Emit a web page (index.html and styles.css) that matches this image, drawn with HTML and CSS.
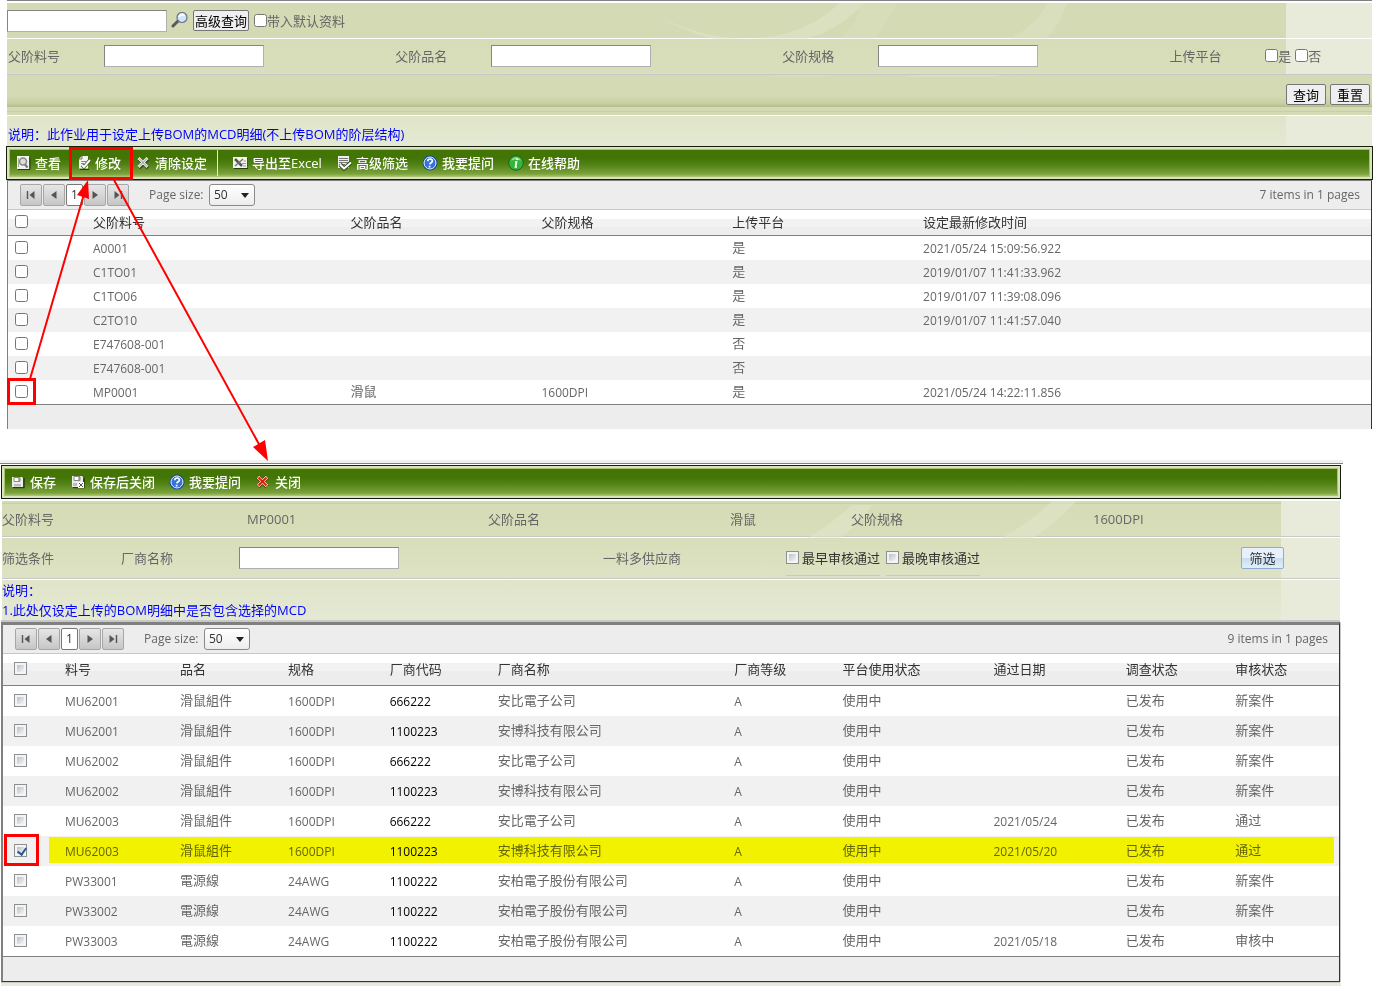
FILE: index.html
```html
<!DOCTYPE html>
<html lang="zh-CN">
<head>
<meta charset="utf-8">
<title>BOM MCD 设定</title>
<link rel="stylesheet" href="styles.css">
</head>
<body>
<svg class="symbols" aria-hidden="true">
  <symbol id="i-first" viewBox="0 0 10 10"><path d="M1.500 1v8" stroke="#555" stroke-width="1.400"/><path d="M8.500 1v8L3.500 5z" fill="#555"/></symbol>
  <symbol id="i-prev" viewBox="0 0 10 10"><path d="M7.500 1v8L2 5z" fill="#555"/></symbol>
  <symbol id="i-next" viewBox="0 0 10 10"><path d="M2.500 1v8L8 5z" fill="#555"/></symbol>
  <symbol id="i-last" viewBox="0 0 10 10"><path d="M8.500 1v8" stroke="#555" stroke-width="1.400"/><path d="M1.500 1v8l5-4z" fill="#555"/></symbol>
  <symbol id="i-view" viewBox="0 0 16 16"><path d="M3 14.500h12V3" fill="none" stroke="#24400a"/><path d="M2 1h12v13H2z" fill="#f2f2ee"/><circle cx="8" cy="6.500" r="3.500" fill="#ddd" stroke="#888" stroke-width="1.500"/><path d="M10 9.500l2.500 3" stroke="#777" stroke-width="2"/><path d="M3.500 3v9" stroke="#aaa"/></symbol>
  <symbol id="i-edit" viewBox="0 0 16 16"><path d="M5 14.500h9M14 4v3" stroke="#24400a"/><path d="M7 1h6v12.500H4V4z" fill="#f4f4f0"/><path d="M4 4h3V1" fill="none" stroke="#777"/><path d="M6 6.500h5M6 8.500h3" stroke="#888"/><path d="M15 5l-6 7-2-2" fill="none" stroke="#36521b" stroke-width="3.500"/><path d="M15 5l-6 7-2-2" fill="none" stroke="#fff" stroke-width="2"/></symbol>
  <symbol id="i-clear" viewBox="0 0 16 16"><path d="M4 4l9 9M13 4l-9 9" stroke="#2a4314" stroke-width="3.600"/><path d="M3.500 3l9 9M12.500 3l-9 9" stroke="#eee" stroke-width="3"/><path d="M4 3.500l8 8M12 3.500l-8 8" stroke="#8b9580"/></symbol>
  <symbol id="i-excel" viewBox="0 0 16 16"><path d="M2 13.500h14V3" fill="none" stroke="#24400a"/><path d="M1 2h14v11H1z" fill="#f4f4ef"/><path d="M3 4l7 7" stroke="#555" stroke-width="2.500"/><path d="M11 4l-8 7" stroke="#777" stroke-width="1.500"/><path d="M10 8.500h4M11.500 6h2.500M11 11h3" stroke="#999"/></symbol>
  <symbol id="i-filter" viewBox="0 0 16 16"><path d="M2 1h11v12H2z" fill="#eee"/><path d="M3 3.500h9M3 5.500h9M3 7.500h9M3 9.500h6" stroke="#777"/><path d="M4 9.500l4 4 7-6" fill="none" stroke="#24400a" stroke-width="4"/><path d="M4 9.500l4 4 7-6" fill="none" stroke="#fff" stroke-width="2.200"/></symbol>
  <symbol id="i-help" viewBox="0 0 16 16"><circle cx="8" cy="8" r="7.500" fill="#174b9c"/><circle cx="8" cy="8" r="6" fill="#3474d8" stroke="#e9f1ff" stroke-width="1"/><path d="M5.700 6.200c.2-3 5-2.800 4.700-.1C10.200 7.700 8 7.800 7.800 9.400M7.600 10.700v1.700" fill="none" stroke="#fff" stroke-width="1.700"/></symbol>
  <symbol id="i-info" viewBox="0 0 16 16"><circle cx="8" cy="8" r="7.300" fill="#34b53c" stroke="#1d641c"/><path d="M3 6c2-5 8-5 10 0-3-2-7-2-10 0z" fill="#9be09a"/><path d="M9.200 3.500L8.900 5M7 7h1.500l-1 5h1.400" fill="none" stroke="#fff" stroke-width="1.700"/></symbol>
  <symbol id="i-save" viewBox="0 0 16 16"><path d="M3 13.500h11V4" fill="none" stroke="#24400a" stroke-width="1.500"/><path d="M2 3h10l1 1v9H2z" fill="#ecece8"/><path d="M4 3.500h6v4H4z" fill="#fff" stroke="#888"/><path d="M9 4v3" stroke="#666"/><path d="M4 10h7v2.500H4z" fill="#bbb"/></symbol>
  <symbol id="i-saveclose" viewBox="0 0 16 16"><path d="M3 13.500h11V4" fill="none" stroke="#24400a" stroke-width="1.500"/><path d="M2 2h10l1 1v10H2z" fill="#ecece8"/><path d="M4 2.500h6v4H4z" fill="#fff" stroke="#888"/><path d="M9 3v3" stroke="#666"/><path d="M8 8h6v6H8z" fill="#fff"/><path d="M9 9l4 4M13 9l-4 4" stroke="#555"/><path d="M3 9h4v3H3z" fill="#bbb"/></symbol>
  <symbol id="i-close" viewBox="0 0 16 16"><path d="M3 3l9 9.500M12 3l-9 9.500" stroke="#3a2a08" stroke-width="4.400"/><path d="M3 3l9 9M12 3l-9 9" stroke="#ffe9a8" stroke-width="3.400"/><path d="M3.500 3.500l8 8M11.500 3.500l-8 8" stroke="#d8200f" stroke-width="1.900"/></symbol>
</svg>

<main class="page">
  <section class="panel-list">
    <div class="band band-quick">
      <svg class="swirl" viewBox="0 0 1280 74" aria-hidden="true"><path d="M650 12C710 46 790 44 832 0h25C800 64 700 44 650 12z"/><path d="M900 74C990 50 1030 26 1040 0h20c-10 30-30 50-70 74z" opacity=".7"/><path d="M760 74C830 50 850 25 855 0h35C870 40 850 60 820 74z" opacity=".4"/></svg>
      <input class="field" type="text" aria-label="快速查询">
      <svg class="lens" viewBox="0 0 18 18" aria-hidden="true"><path d="M2 14l5-5" stroke="#555b60" stroke-width="3" stroke-linecap="round"/><circle cx="11" cy="5.500" r="5" fill="#cfe6fa" stroke="#6b7480" stroke-width="1.200"/><path d="M8 5c1-3 5-3 5-1" fill="none" stroke="#fff" stroke-width="2"/></svg>
      <button class="btn" type="button">高级查询</button>
      <label class="check"><input type="checkbox">带入默认资料</label>
    </div>
    <div class="band band-fields">
      <label for="f1">父阶料号</label><input class="field" id="f1" type="text">
      <label for="f2">父阶品名</label><input class="field" id="f2" type="text">
      <label for="f3">父阶规格</label><input class="field" id="f3" type="text">
      <span>上传平台</span>
      <span class="pair"><label class="check"><input type="checkbox">是</label><label class="check"><input type="checkbox">否</label></span>
    </div>
    <div class="band-actions">
      <div class="actions"><button class="btn" type="button">查询</button><button class="btn" type="button">重置</button></div>
    </div>
    <p class="band note note-one">说明：此作业用于设定上传BOM的MCD明细(不上传BOM的阶层结构)</p>
    <div class="toolbar toolbar-wide">
      <div class="tools">
        <button type="button"><svg><use href="#i-view"/></svg>查看</button>
        <button type="button"><svg><use href="#i-edit"/></svg>修改</button>
        <button type="button"><svg><use href="#i-clear"/></svg>清除设定</button>
        <i class="sep"></i>
        <button type="button"><svg><use href="#i-excel"/></svg>导出至Excel</button>
        <button type="button"><svg><use href="#i-filter"/></svg>高级筛选</button>
        <button type="button"><svg><use href="#i-help"/></svg>我要提问</button>
        <button type="button"><svg><use href="#i-info"/></svg>在线帮助</button>
      </div>
    </div>
    <div class="grid-box grid-open">
      <div class="pager">
        <button type="button" aria-label="首页"><svg><use href="#i-first"/></svg></button>
        <button type="button" aria-label="上一页"><svg><use href="#i-prev"/></svg></button>
        <button type="button" class="current">1</button>
        <button type="button" aria-label="下一页"><svg><use href="#i-next"/></svg></button>
        <button type="button" aria-label="末页"><svg><use href="#i-last"/></svg></button>
        <label class="size-label" for="s1">Page size:</label>
        <span class="combo"><select id="s1"><option>50</option></select></span>
        <span class="total">7 items in 1 pages</span>
      </div>
      <table class="list">
        <colgroup><col class="a0"><col class="a1"><col class="a2"><col class="a2"><col class="a2"><col></colgroup>
        <thead><tr><th><input type="checkbox" aria-label="全选"></th><th>父阶料号</th><th>父阶品名</th><th>父阶规格</th><th>上传平台</th><th>设定最新修改时间</th></tr></thead>
        <tbody>
          <tr><td><input type="checkbox" aria-label="A0001"></td><td class="lat">A0001</td><td></td><td></td><td>是</td><td class="lat">2021/05/24 15:09:56.922</td></tr>
          <tr><td><input type="checkbox" aria-label="C1TO01"></td><td class="lat">C1TO01</td><td></td><td></td><td>是</td><td class="lat">2019/01/07 11:41:33.962</td></tr>
          <tr><td><input type="checkbox" aria-label="C1TO06"></td><td class="lat">C1TO06</td><td></td><td></td><td>是</td><td class="lat">2019/01/07 11:39:08.096</td></tr>
          <tr><td><input type="checkbox" aria-label="C2TO10"></td><td class="lat">C2TO10</td><td></td><td></td><td>是</td><td class="lat">2019/01/07 11:41:57.040</td></tr>
          <tr><td><input type="checkbox" aria-label="E747608-001"></td><td class="lat">E747608-001</td><td></td><td></td><td>否</td><td></td></tr>
          <tr><td><input type="checkbox" aria-label="E747608-001"></td><td class="lat">E747608-001</td><td></td><td></td><td>否</td><td></td></tr>
          <tr><td><input type="checkbox" aria-label="MP0001"></td><td class="lat">MP0001</td><td>滑鼠</td><td class="lat">1600DPI</td><td>是</td><td class="lat">2021/05/24 14:22:11.856</td></tr>
        </tbody>
      </table>
      <div class="grid-foot"></div>
    </div>
  </section>

  <div class="divider"></div>

  <section class="panel-detail">
    <div class="toolbar">
      <div class="tools">
        <button type="button"><svg><use href="#i-save"/></svg>保存</button>
        <button type="button"><svg><use href="#i-saveclose"/></svg>保存后关闭</button>
        <button type="button"><svg><use href="#i-help"/></svg>我要提问</button>
        <button type="button"><svg><use href="#i-close"/></svg>关闭</button>
      </div>
    </div>
    <div class="band band-info">
      <svg class="swirl" viewBox="0 0 1280 76" aria-hidden="true"><path d="M560 76C720 90 800 50 850 4h20C840 50 780 70 720 76z"/><path d="M900 60C970 60 1020 30 1050 0h25c-40 40-80 70-175 60z"/><path d="M340 76c20-12 50-20 90-22-10 10-30 18-50 22z" opacity=".7"/></svg>
      <span>父阶料号</span><span>MP0001</span>
      <span>父阶品名</span><span>滑鼠</span>
      <span>父阶规格</span><span>1600DPI</span>
    </div>
    <div class="band band-filter">
      <span>筛选条件</span>
      <label for="f4">厂商名称</label>
      <input class="field" id="f4" type="text">
      <span>一料多供应商</span>
      <span class="options"><label><input class="classic" type="checkbox">最早审核通过</label><label><input class="classic" type="checkbox">最晚审核通过</label></span>
      <button class="btn-blue" type="button">筛选</button>
    </div>
    <div class="band note note-two"><p>说明：</p><p>1.此处仅设定上传的BOM明细中是否包含选择的MCD</p></div>
    <div class="grid-box grid-closed">
      <div class="pager">
        <button type="button" aria-label="首页"><svg><use href="#i-first"/></svg></button>
        <button type="button" aria-label="上一页"><svg><use href="#i-prev"/></svg></button>
        <button type="button" class="current">1</button>
        <button type="button" aria-label="下一页"><svg><use href="#i-next"/></svg></button>
        <button type="button" aria-label="末页"><svg><use href="#i-last"/></svg></button>
        <label class="size-label" for="s2">Page size:</label>
        <span class="combo"><select id="s2"><option>50</option></select></span>
        <span class="total">9 items in 1 pages</span>
      </div>
      <table class="list list-tall">
        <colgroup><col class="b0"><col class="b1"><col class="b2"><col class="b3"><col class="b2"><col class="b5"><col class="b2"><col class="b7"><col class="b8"><col class="b9"><col></colgroup>
        <thead><tr><th><input class="classic" type="checkbox" aria-label="全选"></th><th>料号</th><th>品名</th><th>规格</th><th>厂商代码</th><th>厂商名称</th><th>厂商等级</th><th>平台使用状态</th><th>通过日期</th><th>调查状态</th><th>审核状态</th></tr></thead>
        <tbody>
          <tr><td><input class="classic" type="checkbox" aria-label="MU62001"></td><td class="lat">MU62001</td><td>滑鼠組件</td><td class="lat">1600DPI</td><td class="lat code">666222</td><td>安比電子公司</td><td class="lat">A</td><td>使用中</td><td></td><td>已发布</td><td>新案件</td></tr>
          <tr><td><input class="classic" type="checkbox" aria-label="MU62001"></td><td class="lat">MU62001</td><td>滑鼠組件</td><td class="lat">1600DPI</td><td class="lat code">1100223</td><td>安博科技有限公司</td><td class="lat">A</td><td>使用中</td><td></td><td>已发布</td><td>新案件</td></tr>
          <tr><td><input class="classic" type="checkbox" aria-label="MU62002"></td><td class="lat">MU62002</td><td>滑鼠組件</td><td class="lat">1600DPI</td><td class="lat code">666222</td><td>安比電子公司</td><td class="lat">A</td><td>使用中</td><td></td><td>已发布</td><td>新案件</td></tr>
          <tr><td><input class="classic" type="checkbox" aria-label="MU62002"></td><td class="lat">MU62002</td><td>滑鼠組件</td><td class="lat">1600DPI</td><td class="lat code">1100223</td><td>安博科技有限公司</td><td class="lat">A</td><td>使用中</td><td></td><td>已发布</td><td>新案件</td></tr>
          <tr><td><input class="classic" type="checkbox" aria-label="MU62003"></td><td class="lat">MU62003</td><td>滑鼠組件</td><td class="lat">1600DPI</td><td class="lat code">666222</td><td>安比電子公司</td><td class="lat">A</td><td>使用中</td><td class="lat">2021/05/24</td><td>已发布</td><td>通过</td></tr>
          <tr class="marked"><td><input class="classic" type="checkbox" checked aria-label="MU62003"></td><td class="lat">MU62003</td><td>滑鼠組件</td><td class="lat">1600DPI</td><td class="lat code">1100223</td><td>安博科技有限公司</td><td class="lat">A</td><td>使用中</td><td class="lat">2021/05/20</td><td>已发布</td><td>通过</td></tr>
          <tr><td><input class="classic" type="checkbox" aria-label="PW33001"></td><td class="lat">PW33001</td><td>電源線</td><td class="lat">24AWG</td><td class="lat code">1100222</td><td>安柏電子股份有限公司</td><td class="lat">A</td><td>使用中</td><td></td><td>已发布</td><td>新案件</td></tr>
          <tr><td><input class="classic" type="checkbox" aria-label="PW33002"></td><td class="lat">PW33002</td><td>電源線</td><td class="lat">24AWG</td><td class="lat code">1100222</td><td>安柏電子股份有限公司</td><td class="lat">A</td><td>使用中</td><td></td><td>已发布</td><td>新案件</td></tr>
          <tr><td><input class="classic" type="checkbox" aria-label="PW33003"></td><td class="lat">PW33003</td><td>電源線</td><td class="lat">24AWG</td><td class="lat code">1100222</td><td>安柏電子股份有限公司</td><td class="lat">A</td><td>使用中</td><td class="lat">2021/05/18</td><td>已发布</td><td>审核中</td></tr>
        </tbody>
      </table>
      <div class="grid-foot"></div>
    </div>
    <div class="page-end"></div>
  </section>

  <svg class="marks" width="300" height="880" aria-hidden="true">
    <g fill="none" stroke="#f00" stroke-width="3"><path d="M70.500 148.500h61v30h-61z"/><path d="M8.500 379.500h26v24h-26z"/><path d="M5.500 835.500h32v29h-32z"/></g>
    <path d="M30 379L84 194M114 180L260 446" stroke="#f00" stroke-width="2" fill="none"/>
    <path d="M88 180l1 19-12-4zM268 461l-15-14 12-7z" fill="#f00"/>
  </svg>
</main>
</body>
</html>
```

FILE: styles.css
```css
* { box-sizing: border-box; }

body {
  margin: 0;
  background: #fff;
  color: #666;
  font: 13px/18px "Open Sans", "Noto Sans CJK SC", sans-serif;
}

button, input, select { font: inherit; }
p { margin: 0; }
input[type="checkbox"] { width: 13px; height: 13px; margin: 0; flex: none; }
.symbols { position: absolute; width: 0; height: 0; }
.page { position: relative; }
.marks { position: absolute; left: 0; top: 0; pointer-events: none; }

.panel-list { margin: 0 3px 0 7px; border-top: 1px solid #808080; padding-top: 2px; }
.panel-detail { margin: 0 34px 0 1px; }

/* striped form bands over the fixed-width backdrop */
.band {
  position: relative;
  background: linear-gradient(#d4dab4, #d4dab4) 0 0 / 1279px 100% no-repeat #e8ebda;
}
.swirl { position: absolute; left: 0; top: 0; width: 1280px; height: auto; fill: #e2e7cd; opacity: .5; pointer-events: none; }
.band > :not(.swirl) { position: relative; }

.band-quick { display: flex; align-items: center; height: 35px; }
.lens { width: 18px; height: 18px; margin: 0 4px; }
.band-fields {
  display: grid;
  grid-template-columns: 96fr 292fr 96fr 292fr 96fr 292fr 96fr 104fr;
  align-items: center;
  height: 36px;
  margin-top: 1px;
  padding: 0 3px 2px 1px;
  background-image: linear-gradient(#d6dcb7, #d9dfbc);
  border-bottom: 1px solid #c8c8c8;
}
.band-actions {
  height: 40px;
  background: #d4dab4;
  display: flex;
  flex-direction: column;
  justify-content: space-between;
}
.actions {
  display: flex;
  justify-content: flex-end;
  gap: 4px;
  height: 32px;
  padding: 9px 2px 0 0;
  background: linear-gradient(#d4dab4 20px, #c9d0a4 28px, #b5bd8b);
}
.band-actions::after { content: ""; height: 3px; border-top: 1px solid #c8c8c8; }

.field {
  width: 160px;
  height: 22px;
  padding: 0 3px;
  border: 1px solid;
  border-color: #858585 #b0b0b0 #b0b0b0 #858585;
  background: #fff;
}
.btn {
  height: 21px;
  padding: 0 6px;
  border: 1px solid #767676;
  border-radius: 2px;
  background: #efefef;
  color: #000;
  line-height: 18px;
  white-space: nowrap;
}
.band-quick .btn { padding: 0 1px; }
.check { display: inline-flex; align-items: center; }
.band-quick .check { margin-left: 5px; }
.pair { display: flex; gap: 4px; }

.note { margin-top: 1px; color: #00f; background-image: linear-gradient(#e0e4c8, #e4e9d4); }
.note-one { height: 30px; padding: 9px 1px 0; }
.note-two { height: 40px; line-height: 20px; }

.toolbar { border: 1px solid #151f0b; padding: 2px; background: #dbe2be; }
.toolbar-wide { margin: 0 -1px; }
.tools {
  display: flex;
  height: 28px;
  padding-left: 1px;
  border: 1px solid #a9c26f;
  background: linear-gradient(#437506 8px, #4f8013 14px, #7ba23b 24px, #9ebb61);
}
.tools button {
  display: flex;
  align-items: center;
  gap: 4px;
  padding: 0 10px 1px 4px;
  border: 0;
  background: none;
  color: #fff;
  font-weight: 500;
  white-space: nowrap;
}
.tools svg { width: 16px; height: 16px; }
.sep { width: 1px; margin-right: 10px; background: #e4ecd0; }

/* data grids */
.grid-box { background: #ededed; }
.grid-open { border: solid; border-width: 1px 1px 0; border-color: #808080 #333 #808080 #808080; }
.grid-closed {
  margin: 2px 1px 0 0;
  border: solid;
  border-width: 3px 1px 1px 2px;
  border-color: #808080 #333 #333 #808080;
  box-shadow: 0 1px 0 #c8c8c8, 1px 0 0 #c8c8c8, 0 -2px 0 #c8c8c8;
}
.pager {
  display: flex;
  align-items: center;
  gap: 1px;
  height: 29px;
  padding: 0 11px 0 12px;
  border-bottom: 1px solid #c8c8c8;
  font-size: 12px;
}
.pager button {
  display: flex;
  align-items: center;
  justify-content: center;
  width: 22px;
  height: 22px;
  padding: 0;
  border: 1px solid #a6a6a6;
  border-radius: 2px;
  background: linear-gradient(#e6e6e6, #c6c6c6);
}
.pager button svg { width: 10px; height: 10px; }
.pager .current { width: 17px; border-color: #777; background: #fff; color: #333; }
.size-label { width: 59px; margin-left: 19px; white-space: nowrap; }
.combo { position: relative; }
.combo select {
  display: block;
  appearance: none;
  width: 46px;
  height: 22px;
  padding: 0 4px;
  border: 1px solid #8a8a8a;
  border-radius: 3px;
  background: linear-gradient(#fff, #ededed);
  color: #333;
}
.combo::after {
  content: "";
  position: absolute;
  right: 6px;
  top: 9px;
  border: 4px solid transparent;
  border-top: 5px solid #222;
  border-bottom: 0;
  pointer-events: none;
}
.total { margin-left: auto; }

.list { width: 100%; table-layout: fixed; border-collapse: separate; border-spacing: 0; background: #fff; border-bottom: 1px solid #808080; }
.list th, .list td { height: 24px; padding: 0 0 2px 7px; text-align: left; font-weight: 400; white-space: nowrap; line-height: 18px; }
.list th { height: 26px; color: #333; border-bottom: 1px solid #808080; background: linear-gradient(#fff 9px, #f2f2f2 9px, #f2f2f2 17px, #ededed 17px); }
.list tbody tr:nth-child(even) { background: #f1f1f1; }
.list .lat { padding: 2px 0 0 7px; font-size: 12px; }
.list .code { color: #000; }
.list input { display: block; }
.list-tall th { height: 32px; }
.list-tall td { height: 30px; }
.list-tall th:first-child, .list-tall td:first-child { padding-left: 11px; }
.a0 { width: 78px; }
.a1 { width: 18.9%; }
.a2 { width: 14%; }
.b0 { width: 55px; }
.b1 { width: 8.6%; }
.b2 { width: 8.1%; }
.b3 { width: 7.6%; }
.b5 { width: 17.7%; }
.b7 { width: 11.3%; }
.b8 { width: 9.9%; }
.b9 { width: 8.2%; }
.grid-foot { height: 24px; }

/* highlighter stroke across the ticked row */
.marked { position: relative; }
.marked td:first-child::after {
  content: "";
  position: absolute;
  left: 46px;
  right: 5px;
  top: 1px;
  bottom: 3px;
  background: #ff0;
  mix-blend-mode: multiply;
}

.divider { height: 5px; margin: 31px 32px 0 0; background: linear-gradient(#f0f0f0 3px, #808080 3px, #808080 4px, #fff 4px); }

.panel-detail .band { margin-left: 1px; margin-right: 1px; }
.band-info {
  display: grid;
  grid-template-columns: 245fr 241fr 242fr 121fr 242fr 247fr;
  align-items: center;
  height: 36px;
  margin-top: 2px;
  background-image: linear-gradient(#d4dab4 2px, #c8c8c8 2px, #c8c8c8 3px, #d5dbb5 3px, #d8deba);
  border-bottom: 1px solid #c8c8c8;
}
.band-filter {
  display: grid;
  grid-template-columns: 119fr 118fr 364fr 183fr 455fr 99fr;
  align-items: center;
  height: 41px;
  margin-top: 1px;
  background-image: linear-gradient(#d8deba, #dde2c4);
  border-bottom: 1px solid #c8c8c8;
}
.options { display: flex; gap: 6px; color: #333; }
.options label { display: flex; align-items: center; gap: 3px; height: 36px; border-bottom: 1px solid #c8c8c8; }
.btn-blue {
  width: 43px;
  height: 22px;
  padding: 0;
  border: 1px solid #8fa9d8;
  border-radius: 2px;
  background: linear-gradient(#e8f1fb 50%, #c8dcf2 50%, #dff0f4);
  color: #333;
}

.classic {
  position: relative;
  appearance: none;
  border: 1px solid #8e8f8f;
  padding: 2px;
  background: linear-gradient(135deg, #b9c2cc, #f6f6f6) content-box, #f4f4f4;
}
.classic:checked::after {
  content: "";
  position: absolute;
  left: 4px;
  top: 1px;
  width: 4px;
  height: 7px;
  border: solid #2d5694;
  border-width: 0 2px 2px 0;
  transform: rotate(35deg);
}
.page-end { height: 3px; margin-top: 1px; background: #e8ebda; }
```
